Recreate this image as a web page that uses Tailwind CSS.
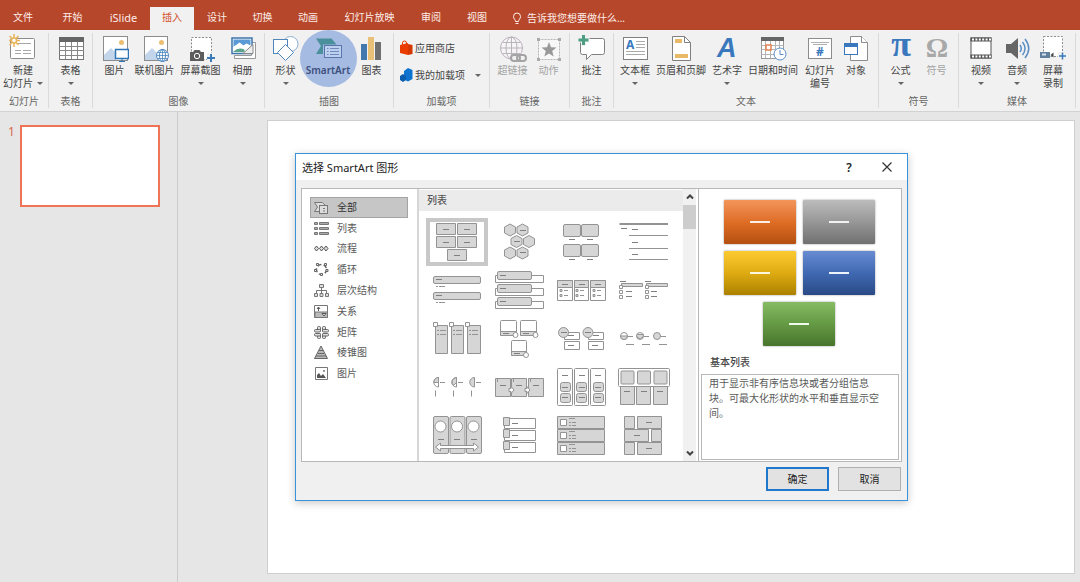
<!DOCTYPE html>
<html lang="zh-CN">
<head>
  <meta charset="UTF-8" />
  <title>选择 SmartArt 图形</title>
  <script src="https://cdn.jsdelivr.net/npm/@tailwindcss/browser@4"></script>
</head>
<body class="min-h-screen flex flex-col bg-[#e6e6e6] text-[#444] text-[10px] leading-[13px] whitespace-nowrap font-['Noto_Sans','Noto_Sans_CJK_SC',sans-serif]">

  <!-- Tabs -->
  <nav class="flex items-end h-[30px] bg-[#b7472a] text-[#fdeee9]">
    <button class="w-[46px] h-[23px] pb-[2px]">文件</button>
    <button class="w-[53px] h-[23px] pb-[2px]">开始</button>
    <button class="w-[49px] h-[23px] pb-[2px] text-[11px]">iSlide</button>
    <button class="w-[44px] h-[23px] pb-[2px] ml-[2px] bg-[#f1f1f1] text-[#d2502d]">插入</button>
    <button class="w-[46px] h-[23px] pb-[2px]">设计</button>
    <button class="w-[45px] h-[23px] pb-[2px]">切换</button>
    <button class="w-[46px] h-[23px] pb-[2px]">动画</button>
    <button class="w-[77px] h-[23px] pb-[2px]">幻灯片放映</button>
    <button class="w-[46px] h-[23px] pb-[2px]">审阅</button>
    <button class="w-[46px] h-[23px] pb-[2px]">视图</button>
    <label for="tellme" class="ml-3 h-[23px] pt-[5px]">
      <svg class="w-[10px] h-[13px]" viewBox="0 0 10 13" fill="none" stroke="#fdeee9"><path d="M3.500 9.500C3.500 7.500 1.500 7 1.500 4.500a3.500 3.500 0 0 1 7 0C8.500 7 6.500 7.500 6.500 9.500zM3.500 11.500h3" /></svg>
    </label>
    <input id="tellme" type="text" placeholder="告诉我您想要做什么..." class="ml-[5px] w-40 h-[23px] pb-[2px] bg-transparent outline-none placeholder:text-[#fdeee9]" />
  </nav>

  <!-- Ribbon -->
  <div class="flex h-[82px] pt-[3px] bg-[#f1f1f1] border-b border-[#d2d2d2]">

    <section class="flex flex-col w-[49px] h-[75px] border-r border-[#dadada]">
      <div class="flex flex-1">
        <button class="w-[46px] flex flex-col items-center pt-px">
          <svg class="w-7 h-7 mb-[2px]" viewBox="0 0 28 28" fill="none">
            <rect x="1.500" y="4.500" width="24" height="20" rx="1" fill="#fff" stroke="#8c8c8c" />
            <path d="M8 9.500h14M6 16.500h6M14 16.500h8M6 19.500h6M14 19.500h8" stroke="#a8a8a8" />
            <path d="M5 0v13M-1 6.500h12M.5 2l9 9M9.500 2l-9 9" stroke="#e9b55c" stroke-width="1.500" />
            <circle cx="5" cy="6.500" r="2.500" fill="#fff" stroke="#e9b55c" stroke-width="1.500" />
          </svg>
          <span>新建</span>
          <span class="flex items-center gap-1">幻灯片<i class="border-x-3 border-t-3 border-x-transparent border-t-[#666]"></i></span>
        </button>
      </div>
      <h2 class="text-center text-[#666]">幻灯片</h2>
    </section>

    <section class="flex flex-col w-[44px] h-[75px] border-r border-[#dadada]">
      <div class="flex flex-1 justify-center">
        <button class="w-9 flex flex-col items-center pt-px">
          <svg class="w-7 h-7 mb-[2px]" viewBox="0 0 28 28" fill="none">
            <rect x="2.500" y="3.500" width="24" height="22" fill="#fff" stroke="#777" />
            <path d="M2 3h25v5H2z" fill="#666" />
            <path d="M8.500 8v17M14.500 8v17M20.500 8v17M2.500 12.500h24M2.500 16.500h24M2.500 21.500h24" stroke="#888" />
          </svg>
          <span>表格</span>
          <i class="mt-[5px] border-x-3 border-t-3 border-x-transparent border-t-[#666]"></i>
        </button>
      </div>
      <h2 class="text-center text-[#666]">表格</h2>
    </section>

    <section class="flex flex-col w-[172px] h-[75px] border-r border-[#dadada]">
      <div class="flex flex-1 justify-center">
        <button class="w-9 flex flex-col items-center pt-px">
          <svg class="w-7 h-7 mb-[2px]" viewBox="0 0 28 28" fill="none">
            <rect x="2.500" y="2.500" width="24" height="24" fill="#fff" stroke="#8c8c8c" />
            <circle cx="20.500" cy="8.500" r="2.500" fill="#eabf72" />
            <path d="M3 21l7-7 5 5v7H3z" fill="#c3d5ea" />
            <rect x="14.500" y="15.500" width="13" height="9" fill="#fff" stroke="#2f74b5" stroke-width="1.500" />
            <path d="M21 25v2.500M18 27.500h6" stroke="#2f74b5" />
          </svg>
          <span>图片</span>
        </button>
        <button class="w-11 flex flex-col items-center pt-px">
          <svg class="w-7 h-7 mb-[2px]" viewBox="0 0 28 28" fill="none">
            <rect x="3.500" y="2.500" width="23" height="24" fill="#fff" stroke="#8c8c8c" />
            <circle cx="20.500" cy="8.500" r="2.500" fill="#eabf72" />
            <path d="M4 21l7-7 6 6v6H4z" fill="#c3d5ea" />
            <circle cx="21.500" cy="21.500" r="6" fill="#fff" stroke="#4a86c0" />
            <ellipse cx="21.500" cy="21.500" rx="3" ry="6" stroke="#4a86c0" />
            <path d="M15.500 21.500h12M21.500 15.500v12M16.500 18.500h10M16.500 24.500h10" stroke="#4a86c0" stroke-width=".8" />
          </svg>
          <span>联机图片</span>
        </button>
        <button class="w-12 flex flex-col items-center pt-px">
          <svg class="w-7 h-7 mb-[2px]" viewBox="0 0 28 28" fill="none">
            <rect x="4.500" y="3.500" width="20" height="22" fill="#fff" stroke="#8c8c8c" stroke-dasharray="2 1.500" />
            <path d="M3 18h3l1.500-2h5l1.500 2h3v9H3z" fill="#5c5c5c" />
            <circle cx="10" cy="22" r="2.700" stroke="#fff" />
            <path d="M20 19h8v9h-8z" fill="#f1f1f1" />
            <path d="M24 20v8M20 24h8" stroke="#3a7ab8" stroke-width="2" />
          </svg>
          <span>屏幕截图</span>
          <i class="mt-[5px] border-x-3 border-t-3 border-x-transparent border-t-[#666]"></i>
        </button>
        <button class="w-9 flex flex-col items-center pt-px">
          <svg class="w-7 h-7 mb-[2px]" viewBox="0 0 28 28" fill="none">
            <path d="M5.500 24.500v-3h17v-13h4v16z" fill="#fff" stroke="#999" />
            <rect x="3" y="4" width="20" height="15.500" fill="#fff" stroke="#3f76ab" stroke-width="1.500" />
            <path d="M4.500 5.500h17v6l-4-2-3 2-4-3-6 5z" fill="#5b9bd5" />
            <path d="M4.500 12.500l6-3.500 4 3 3-2 4 2v2l-6 1-5 2-6-.5z" fill="#fff" />
            <path d="M4.500 17.500q5-5 11-2v2.500h-11z" fill="#5ba58a" />
            <path d="M14 19.500l10-9v9z" fill="#eee" stroke="#888" />
          </svg>
          <span>相册</span>
          <i class="mt-[5px] border-x-3 border-t-3 border-x-transparent border-t-[#666]"></i>
        </button>
      </div>
      <h2 class="text-center text-[#666]">图像</h2>
    </section>

    <section class="flex flex-col w-[129px] h-[75px] border-r border-[#dadada]">
      <div class="flex flex-1 justify-center">
        <button class="w-7 flex flex-col items-center pt-px">
          <svg class="w-7 h-7 mb-[2px]" viewBox="0 0 28 28" fill="#fff" stroke="#4f86bb">
            <circle cx="18.500" cy="10" r="7.500" stroke="#8fb0d0" />
            <rect x="1.500" y="5.500" width="14" height="14" />
            <path d="M13.500 10.500l8 8-8 8-8-8z" />
          </svg>
          <span>形状</span>
          <i class="mt-[5px] border-x-3 border-t-3 border-x-transparent border-t-[#666]"></i>
        </button>
        <button class="w-[57px] h-[57px] -mt-[3px] flex flex-col items-center pt-1 rounded-full bg-[#a5bbe2] text-[#3c4f7c] font-semibold">
          <svg class="w-7 h-7 mb-[2px]" viewBox="0 0 28 28" fill="none">
            <path d="M2 4.500h15.500l5 6H9v9.500H2l5-8z" fill="#4a8f9c" />
            <rect x="10.500" y="11.500" width="17" height="12" fill="#bccfee" stroke="#5876ac" />
            <path d="M13 14.500h1.500M16 14.500h9M13 17.500h1.500M16 17.500h9M13 20.500h1.500M16 20.500h9" stroke="#6f8abb" />
          </svg>
          <span>SmartArt</span>
        </button>
        <button class="w-[30px] flex flex-col items-center pt-px">
          <svg class="w-7 h-7 mb-[2px]" viewBox="0 0 28 28">
            <path d="M3 10h6v16H3z" fill="#4378ae" />
            <path d="M10 3h6v23h-6z" fill="#e9c078" />
            <path d="M17 8h6v18h-6z" fill="#6f6f6f" />
          </svg>
          <span>图表</span>
        </button>
      </div>
      <h2 class="text-center text-[#666]">插图</h2>
    </section>

    <section class="flex flex-col w-[96px] h-[75px] border-r border-[#dadada]">
      <div class="flex flex-col flex-1 items-start gap-[11px] pl-[6px] pt-[7px]">
        <button class="flex items-center gap-[2px] h-4">
          <svg class="w-[13px] h-4" viewBox="0 0 13 16"><path d="M0 5l8-2v12l-8-2z" fill="#eb3c00" /><path d="M8 4l4.500 1v9L8 15z" fill="#d63600" /><path d="M2.500 5V3q0-2 2-2t2 2v1" fill="none" stroke="#eb3c00" /></svg>
          应用商店
        </button>
        <button class="flex items-center gap-[2px] h-4">
          <svg class="w-[13px] h-4" viewBox="0 0 13 16"><path d="M4 4l4-3 4.500 2v9L8 14.500 5 13V9l-1-1z" fill="#0e74cf" /><path d="M0 9l3-2 3 2v4l-3 2-3-2z" fill="#0b5fae" /></svg>
          我的加载项
          <i class="ml-2 border-x-3 border-t-3 border-x-transparent border-t-[#666]"></i>
        </button>
      </div>
      <h2 class="text-center text-[#666]">加载项</h2>
    </section>

    <section class="flex flex-col w-[80px] h-[75px] border-r border-[#dadada]">
      <div class="flex flex-1 justify-center text-[#a3a3a3]">
        <button disabled class="w-[38px] flex flex-col items-center pt-px">
          <svg class="w-7 h-7 mb-[2px]" viewBox="0 0 28 28" fill="none" stroke="#b9b3ba">
            <circle cx="12.500" cy="14" r="11" fill="#f6f4f6" />
            <ellipse cx="12.500" cy="14" rx="5.500" ry="11" />
            <path d="M1.500 14h22M12.500 3v22M3.500 8.500h18M3.500 19.500h18" />
            <g fill="#f1f1f1" stroke="#a3a3a3" stroke-width="2"><rect x="12" y="21" width="9" height="6" rx="3" /><rect x="18" y="21" width="9" height="6" rx="3" fill="none" /></g>
          </svg>
          <span>超链接</span>
        </button>
        <button disabled class="w-[34px] flex flex-col items-center pt-px">
          <svg class="w-7 h-7 mb-[2px]" viewBox="0 0 28 28">
            <rect x="3.500" y="5.500" width="21" height="20" fill="#f7f7f7" stroke="#b5b5b5" stroke-dasharray="2 1" />
            <path d="M2 4h3v3H2zM23 4h3v3h-3zM2 24h3v3H2zM23 24h3v3h-3z" fill="#aaa" />
            <path d="M14 8l2 5.200 5.500.3-4.300 3.500 1.500 5.500-4.700-3.100-4.700 3.100 1.500-5.500-4.300-3.500 5.500-.3z" fill="#999" />
          </svg>
          <span>动作</span>
        </button>
      </div>
      <h2 class="text-center text-[#666]">链接</h2>
    </section>

    <section class="flex flex-col w-[44px] h-[75px] border-r border-[#dadada]">
      <div class="flex flex-1 justify-center">
        <button class="w-9 flex flex-col items-center pt-px">
          <svg class="w-7 h-7 mb-[2px]" viewBox="0 0 28 28" fill="none">
            <path d="M4.500 4.500h20q2 0 2 2v12q0 2-2 2h-11l-5 5v-5h-4q-2 0-2-2v-12q0-2 2-2z" fill="#fff" stroke="#808080" />
            <path d="M5.500 0v12M-.5 6h12" stroke="#f1f1f1" stroke-width="5" />
            <path d="M5.500 1v10M.5 6h10" stroke="#4e9e81" stroke-width="3" />
          </svg>
          <span>批注</span>
        </button>
      </div>
      <h2 class="text-center text-[#666]">批注</h2>
    </section>

    <section class="flex flex-col w-[265px] h-[75px] border-r border-[#dadada]">
      <div class="flex flex-1">
        <button class="w-[42px] flex flex-col items-center pt-px">
          <svg class="w-7 h-7 mb-[2px]" viewBox="0 0 28 28">
            <rect x="2.500" y="3.500" width="24" height="22" fill="#fff" stroke="#808080" />
            <path d="M15 7.500h9M15 10.500h9M15 13.500h9M5 17.500h19M5 20.500h19" stroke="#aaa" />
            <text x="5" y="15" fill="#3a78bd" font-size="12" font-weight="700">A</text>
          </svg>
          <span>文本框</span>
          <i class="mt-[5px] border-x-3 border-t-3 border-x-transparent border-t-[#666]"></i>
        </button>
        <button class="w-[50px] flex flex-col items-center pt-px">
          <svg class="w-7 h-7 mb-[2px]" viewBox="0 0 28 28">
            <path d="M5.500 2.500h12l6 6v18h-18z" fill="#fff" stroke="#808080" />
            <path d="M17.500 2.500v6h6" fill="none" stroke="#808080" />
            <path d="M8 5h7v4H8zM8 20h13v4H8z" fill="#e9b968" />
          </svg>
          <span>页眉和页脚</span>
        </button>
        <button class="w-[42px] flex flex-col items-center pt-px">
          <svg class="w-7 h-7 mb-[2px] overflow-visible" viewBox="0 0 28 28">
            <text x="4" y="23" fill="#3a78bd" font-size="27" font-weight="700" font-style="italic" font-family="Liberation Sans, sans-serif">A</text>
          </svg>
          <span>艺术字</span>
          <i class="mt-[5px] border-x-3 border-t-3 border-x-transparent border-t-[#666]"></i>
        </button>
        <button class="w-[50px] flex flex-col items-center pt-px">
          <svg class="w-7 h-7 mb-[2px]" viewBox="0 0 28 28" fill="none">
            <rect x="2.500" y="3.500" width="22" height="21" fill="#fff" stroke="#999" />
            <path d="M6.500 7v17M11.500 7v17M16.500 7v17M20.500 7v17M2.500 11.500h22M2.500 15.500h22M2.500 20.500h22" stroke="#b5b5b5" />
            <path d="M2 3h23v4H2z" fill="#666" />
            <rect x="7" y="11" width="5" height="5" fill="#fff" stroke="#e38350" stroke-width="1.500" />
            <circle cx="21" cy="20" r="6" fill="#fff" stroke="#5b8fc4" />
            <path d="M21 16v4.500h3.500" stroke="#5b8fc4" />
          </svg>
          <span>日期和时间</span>
        </button>
        <button class="w-11 flex flex-col items-center pt-px">
          <svg class="w-7 h-7 mb-[2px]" viewBox="0 0 28 28">
            <rect x="2.500" y="4.500" width="23" height="20" fill="#fff" stroke="#8c8c8c" />
            <path d="M5 8.500h18M7 10.500h14" stroke="#b0b0b0" />
            <text x="10" y="22" fill="#3a78bd" font-size="12" font-weight="700">#</text>
          </svg>
          <span>幻灯片</span>
          <span>编号</span>
        </button>
        <button class="w-7 flex flex-col items-center pt-px">
          <svg class="w-7 h-7 mb-[2px]" viewBox="0 0 28 28" fill="#fff">
            <path d="M8.500 2.500h11l6 6v18h-17z" stroke="#8c8c8c" />
            <path d="M19.500 2.500v6h6" stroke="#8c8c8c" />
            <rect x="2.500" y="9.500" width="13" height="11" stroke="#3a78bd" />
            <path d="M2 9h14v4H2z" fill="#3a78bd" />
          </svg>
          <span>对象</span>
        </button>
      </div>
      <h2 class="text-center text-[#666]">文本</h2>
    </section>

    <section class="flex flex-col w-[80px] h-[75px] border-r border-[#dadada]">
      <div class="flex flex-1 justify-center">
        <button class="w-9 flex flex-col items-center pt-px">
          <svg class="w-7 h-7 mb-[2px] overflow-visible" viewBox="0 0 28 28">
            <text x="14" y="22" text-anchor="middle" fill="#3a78bd" font-size="36" font-weight="700" font-family="Liberation Serif, serif">π</text>
          </svg>
          <span>公式</span>
          <i class="mt-[5px] border-x-3 border-t-3 border-x-transparent border-t-[#666]"></i>
        </button>
        <button disabled class="w-9 flex flex-col items-center pt-px text-[#a3a3a3]">
          <svg class="w-7 h-7 mb-[2px] overflow-visible" viewBox="0 0 28 28">
            <text x="14" y="23" text-anchor="middle" fill="#a8a8a8" font-size="28" font-weight="700" font-family="Liberation Serif, serif">Ω</text>
          </svg>
          <span>符号</span>
        </button>
      </div>
      <h2 class="text-center text-[#666]">符号</h2>
    </section>

    <section class="flex flex-col w-[117px] h-[75px] border-r border-[#dadada]">
      <div class="flex flex-1 justify-center">
        <button class="w-9 flex flex-col items-center pt-px">
          <svg class="w-7 h-7 mb-[2px]" viewBox="0 0 28 28">
            <rect x="4" y="4" width="20" height="20" fill="#fff" stroke="#555" />
            <path d="M3.500 5.500h21M3.500 22.500h21" stroke="#555" stroke-width="4" />
            <path d="M5 5.500h19M5 22.500h19" stroke="#fff" stroke-width="2" stroke-dasharray="2 1.400" />
          </svg>
          <span>视频</span>
          <i class="mt-[5px] border-x-3 border-t-3 border-x-transparent border-t-[#666]"></i>
        </button>
        <button class="w-9 flex flex-col items-center pt-px">
          <svg class="w-7 h-7 mb-[2px]" viewBox="0 0 28 28" fill="none" stroke="#5b8fc4" stroke-width="1.500">
            <path d="M3 10h5l7-6v21l-7-6H3z" fill="#666" stroke="none" />
            <path d="M17 11q2.500 3.500 0 7M19.500 8q5 6.500 0 13M22 5q7.500 9.500 0 19" />
          </svg>
          <span>音频</span>
          <i class="mt-[5px] border-x-3 border-t-3 border-x-transparent border-t-[#666]"></i>
        </button>
        <button class="w-9 flex flex-col items-center pt-px">
          <svg class="w-7 h-7 mb-[2px]" viewBox="0 0 28 28">
            <rect x="4.500" y="2.500" width="19" height="20" fill="#fff" stroke="#8c8c8c" stroke-dasharray="2 1.500" />
            <path d="M1 18h10v6H1z" fill="#5f7f9c" />
            <path d="M3 19.500h4v2H3z" fill="#d5e2ef" />
            <path d="M11.500 21l3-2.500v5z" fill="#444" />
            <path d="M19 18h9v8h-9z" fill="#f1f1f1" />
            <path d="M23.500 18.500v7M20 22h7" stroke="#3a78bd" stroke-width="1.500" />
          </svg>
          <span>屏幕</span>
          <span>录制</span>
        </button>
      </div>
      <h2 class="text-center text-[#666]">媒体</h2>
    </section>
  </div>

  <!-- Workspace -->
  <main class="relative flex flex-1">
    <aside class="flex items-start w-[178px] pt-[13px] pl-2 border-r border-[#c9cccc]">
      <span class="w-3 text-[12px] text-[#d9694e]">1</span>
      <button aria-label="幻灯片 1" class="w-[140px] h-[82px] bg-white border-2 border-[#ee7455]"></button>
    </aside>
    <div class="flex flex-1 pt-2 pb-2 pl-[89px] pr-[5px]">
      <div class="flex-1 bg-white border border-[#cfcfcf]"></div>
    </div>

    <!-- Dialog -->
    <div role="dialog" aria-labelledby="dlgTitle" class="absolute left-[295px] top-[41px] w-[613px] bg-[#f0f0f0] border border-[#3a93da] shadow-[0_2px_8px_rgba(0,0,0,0.22)]">
      <header class="flex items-center h-[26px] pl-[6px] pr-[14px] bg-white text-[#222]">
        <h1 id="dlgTitle" class="flex-1 text-[11px]">选择 SmartArt 图形</h1>
        <button aria-label="帮助" class="w-5 mr-[22px] text-[12px] font-semibold">?</button>
        <button aria-label="关闭" class="w-3 h-3">
          <svg class="w-3 h-3" viewBox="0 0 12 12" stroke="#333" stroke-width="1.200"><path d="M1.500 1.500l9 9M10.500 1.500l-9 9" /></svg>
        </button>
      </header>

      <div class="flex h-[274px] mt-2 mx-[5px] bg-white border border-[#b8b8b8]">
        <!-- Categories -->
        <div class="w-[115px] pt-2 pl-2 pr-[9px] text-[#5a5a5a]">
          <div class="grid grid-rows-9 h-[187px]">
            <button class="flex items-center gap-2 pl-[3px] bg-[#c6c6c6] border border-[#a3a3a3] text-[#333]">
              <svg class="w-[15px] h-[15px]" viewBox="0 0 15 15" fill="#ddd" stroke="#777"><path d="M.5 2.500h8l3 3h-5v6h-6l3-4.500z" /><rect x="5.500" y="5.500" width="8" height="8" /><path d="M9 8.500h2M9 11h2" /></svg>
              全部
            </button>
            <button class="flex items-center gap-2 pl-1">
              <svg class="w-[15px] h-[15px]" viewBox="0 0 15 15" fill="#aaa" stroke="#777"><path d="M.5 1.500h3v2h-3zM5.500 1.500h9v2h-9zM.5 6.500h3v2h-3zM5.500 6.500h9v2h-9zM.5 11.500h3v2h-3zM5.500 11.500h9v2h-9z" /></svg>
              列表
            </button>
            <button class="flex items-center gap-2 pl-1">
              <svg class="w-[15px] h-[15px]" viewBox="0 0 15 15" fill="#ddd" stroke="#555"><path d="M2.500 5l2 2.500-2 2.500-2-2.500zM7.500 5l2 2.500-2 2.500-2-2.500zM12 5l2 2.500-2 2.500-2-2.500z" /></svg>
              流程
            </button>
            <button class="flex items-center gap-2 pl-1">
              <svg class="w-[15px] h-[15px]" viewBox="0 0 15 15" fill="#eee" stroke="#666"><circle cx="7.500" cy="7.500" r="5" fill="none" stroke-width="1.500" stroke-dasharray="4 2.300" /><path d="M2.500 1.500h2v2h-2zM10.500 1.500h2v2h-2zM12 7.500h2v2h-2zM6.500 11.500h2v2h-2zM.5 7.500h2v2h-2z" /></svg>
              循环
            </button>
            <button class="flex items-center gap-2 pl-1">
              <svg class="w-[15px] h-[15px]" viewBox="0 0 15 15" fill="#ddd" stroke="#777"><path d="M7.500 4v7M2.500 11V7.500h10V11" fill="none" /><path d="M5.500 1.500h4v3h-4zM.5 10.500h3v3h-3zM6 10.500h3v3H6zM11.500 10.500h3v3h-3z" /></svg>
              层次结构
            </button>
            <button class="flex items-center gap-2 pl-1">
              <svg class="w-[15px] h-[15px]" viewBox="0 0 15 15" fill="#fff" stroke="#777"><path d="M.5 1.500h13v12H.5z" /><path d="M1 8h12.500v5.500H1z" fill="#bbb" /><path d="M4.500 7V3M3 5l1.500-2L6 5M8 9.500h4l-2 2.500z" stroke="#555" /></svg>
              关系
            </button>
            <button class="flex items-center gap-2 pl-1">
              <svg class="w-[15px] h-[15px]" viewBox="0 0 15 15" fill="#ddd" stroke="#666"><rect x="3.500" y="1.500" width="3" height="5" rx="1" /><rect x="8.500" y="1.500" width="3" height="5" rx="1" /><rect x="3.500" y="8.500" width="3" height="5" rx="1" /><rect x="8.500" y="8.500" width="3" height="5" rx="1" /><rect x=".5" y="4.500" width="6" height="2.500" rx="1" /><rect x="8.500" y="4.500" width="6" height="2.500" rx="1" /><rect x=".5" y="8.500" width="6" height="2.500" rx="1" /><rect x="8.500" y="8.500" width="6" height="2.500" rx="1" /></svg>
              矩阵
            </button>
            <button class="flex items-center gap-2 pl-1">
              <svg class="w-[15px] h-[15px]" viewBox="0 0 15 15" fill="#bbb" stroke="#666"><path d="M7 1l6.500 12.500H.5z" /><path d="M5 5.500h4M4 8.500h6M2 11h10" /></svg>
              棱锥图
            </button>
            <button class="flex items-center gap-2 pl-1">
              <svg class="w-[15px] h-[15px]" viewBox="0 0 15 15"><path d="M1.500 1.500h12v12h-12z" fill="#fff" stroke="#777" /><path d="M3 12V9l2-2 2 3 2-2 3 4z" fill="#555" /><circle cx="10" cy="5" r="1" fill="#777" /></svg>
              图片
            </button>
          </div>
        </div>

        <!-- Layout gallery -->
        <div class="w-[266px] border-l-2 border-[#d6d6d6]">
          <h2 class="mt-px h-[21px] pl-2 leading-[21px] bg-[#ebebeb] font-medium text-[#555]">列表</h2>
          <svg class="hidden">
            <defs>
              <path id="dash" d="M0 0h6" fill="none" stroke="#808080" />
              <g id="hex"><path d="M0-6L5.500-3v6L0 6-5.500 3v-6z" /></g>
            </defs>
          </svg>
          <div class="grid grid-cols-[repeat(4,62px)] auto-rows-[48px] mt-[7px] ml-[7px] fill-[#d6d6d6] stroke-[#939393]">
            <button aria-label="基本列表" class="inset-ring-4 inset-ring-[#c8c8c8]">
              <svg class="w-[62px] h-12" viewBox="0 0 62 48">
                <path d="M10.500 5.500h19v11h-19zM31.500 5.500h19v11h-19zM10.500 18.500h19v11h-19zM31.500 18.500h19v11h-19zM21.500 31.500h19v11h-19z" />
                <use href="#dash" x="17" y="11.500" /><use href="#dash" x="38" y="11.500" /><use href="#dash" x="17" y="24.500" /><use href="#dash" x="38" y="24.500" /><use href="#dash" x="28" y="37.500" />
              </svg>
            </button>
            <button aria-label="交替六边形">
              <svg class="w-[62px] h-12" viewBox="0 0 62 48">
                <use href="#hex" x="22" y="12" /><use href="#hex" x="34.500" y="12" /><use href="#hex" x="28.500" y="23.500" /><use href="#hex" x="41" y="23.500" /><use href="#hex" x="22" y="35" /><use href="#hex" x="34.500" y="35" />
                <use href="#dash" x="32" y="12.500" /><use href="#dash" x="26" y="23.500" /><use href="#dash" x="32" y="34.500" />
              </svg>
            </button>
            <button aria-label="图片题注列表">
              <svg class="w-[62px] h-12" viewBox="0 0 62 48">
                <rect x="13.500" y="6.500" width="17" height="12" rx="1.500" /><rect x="31.500" y="6.500" width="17" height="12" rx="1.500" /><rect x="13.500" y="26.500" width="17" height="12" rx="1.500" /><rect x="31.500" y="26.500" width="17" height="12" rx="1.500" />
                <use href="#dash" x="19" y="21.500" /><use href="#dash" x="37" y="21.500" /><use href="#dash" x="19" y="41.500" /><use href="#dash" x="37" y="41.500" />
              </svg>
            </button>
            <button aria-label="线型列表">
              <svg class="w-[62px] h-12" viewBox="0 0 62 48">
                <path d="M7.500 6H56" stroke-width="2" /><path d="M17 17.500h39M17 30.500h39M17 41.500h39" />
                <use href="#dash" x="9" y="10.500" /><use href="#dash" x="20" y="11.500" /><use href="#dash" x="20" y="24.500" /><use href="#dash" x="20" y="36.500" />
              </svg>
            </button>

            <button aria-label="垂直项目符号列表">
              <svg class="w-[62px] h-12" viewBox="0 0 62 48">
                <rect x="7.500" y="10.500" width="47" height="7" rx="1.500" /><rect x="7.500" y="26.500" width="47" height="7" rx="1.500" />
                <use href="#dash" x="10" y="13.500" /><use href="#dash" x="10" y="29.500" />
                <path d="M10 20.500h2M13 20.500h6M10 36.500h2M13 36.500h6" />
              </svg>
            </button>
            <button aria-label="垂直框列表">
              <svg class="w-[62px] h-12" viewBox="0 0 62 48">
                <path d="M7.500 9.500h48v7h-48zM7.500 22.500h48v7h-48zM7.500 35.500h48v7h-48z" fill="#fff" />
                <rect x="9.500" y="5.500" width="34" height="8" rx="1.500" /><rect x="9.500" y="18.500" width="34" height="8" rx="1.500" /><rect x="9.500" y="31.500" width="34" height="8" rx="1.500" />
                <use href="#dash" x="12" y="9.500" /><use href="#dash" x="12" y="22.500" /><use href="#dash" x="12" y="35.500" />
              </svg>
            </button>
            <button aria-label="水平项目符号列表">
              <svg class="w-[62px] h-12" viewBox="0 0 62 48">
                <path d="M7.500 14.500h15v20h-15zM24.500 14.500h14v20h-14zM40.500 14.500h15v20h-15z" fill="#fff" />
                <path d="M7.500 14.500h15v7h-15zM24.500 14.500h14v7h-14zM40.500 14.500h15v7h-15z" />
                <use href="#dash" x="12" y="18.500" /><use href="#dash" x="29" y="18.500" /><use href="#dash" x="45" y="18.500" />
                <path d="M10 23.500h2v2h-2zM26 23.500h2v2h-2zM43 23.500h2v2h-2zM10 28.500h2v2h-2zM26 28.500h2v2h-2zM43 28.500h2v2h-2zM14 24.500h4M30 24.500h4M47 24.500h4M14 29.500h4M30 29.500h4M47 29.500h4" />
              </svg>
            </button>
            <button aria-label="方形重点列表">
              <svg class="w-[62px] h-12" viewBox="0 0 62 48">
                <path d="M9.500 17.500h21v3h-21zM34.500 17.500h21v3h-21z" />
                <path d="M7.500 19.500h3v3h-3zM7.500 24.500h3v3h-3zM7.500 29.500h3v3h-3zM33.500 19.500h3v3h-3zM33.500 24.500h3v3h-3zM33.500 29.500h3v3h-3z" fill="#fff" />
                <use href="#dash" x="8" y="15.500" /><use href="#dash" x="33" y="15.500" /><use href="#dash" x="14" y="25.500" /><use href="#dash" x="39" y="25.500" /><use href="#dash" x="14" y="30.500" /><use href="#dash" x="39" y="30.500" />
              </svg>
            </button>

            <button aria-label="图片重点列表">
              <svg class="w-[62px] h-12" viewBox="0 0 62 48">
                <path d="M9.500 11.500h12v28h-12zM25.500 11.500h12v28h-12zM41.500 11.500h13v28h-13z" />
                <path d="M7.500 8.500h4v4h-4zM23.500 8.500h4v4h-4zM39.500 8.500h4v4h-4z" fill="#fff" />
                <path d="M11 16.500h2M14 16.500h6M11 20.500h2M14 20.500h6M27 16.500h2M30 16.500h6M27 20.500h2M30 20.500h6M43 16.500h2M46 16.500h6M43 20.500h2M46 20.500h6" />
              </svg>
            </button>
            <button aria-label="蛇形图片重点列表">
              <svg class="w-[62px] h-12" viewBox="0 0 62 48">
                <g fill="#fff"><rect x="12.500" y="6.500" width="16" height="15" rx="1" /><rect x="32.500" y="6.500" width="16" height="15" rx="1" /><rect x="23.500" y="26.500" width="15" height="15" rx="1" /></g>
                <path d="M12.500 17.500h16v4h-16zM32.500 17.500h16v4h-16zM23.500 37.500h15v4h-15z" />
                <g fill="#fff"><circle cx="27.500" cy="21" r="2.500" /><circle cx="47.500" cy="21" r="2.500" /><circle cx="38" cy="41" r="2.500" /></g>
                <use href="#dash" x="15" y="19.500" /><use href="#dash" x="35" y="19.500" /><use href="#dash" x="26" y="39.500" />
              </svg>
            </button>
            <button aria-label="堆叠列表">
              <svg class="w-[62px] h-12" viewBox="0 0 62 48">
                <path d="M14.500 18.500h15v7h-15zM14.500 27.500h15v8h-15zM38.500 18.500h15v7h-15zM38.500 27.500h15v8h-15z" fill="#fff" />
                <circle cx="13.500" cy="18.500" r="5" /><circle cx="38" cy="18.500" r="5" />
                <use href="#dash" x="11" y="18.500" /><use href="#dash" x="35" y="18.500" /><use href="#dash" x="18" y="21.500" /><use href="#dash" x="43" y="21.500" /><use href="#dash" x="18" y="31.500" /><use href="#dash" x="42" y="31.500" />
              </svg>
            </button>
            <button aria-label="递增循环流程">
              <svg class="w-[62px] h-12" viewBox="0 0 62 48">
                <circle cx="12" cy="22" r="3.500" fill="#fff" /><path d="M8.500 22h7a3.500 3.500 0 0 1-7 0z" />
                <circle cx="28" cy="22" r="3.500" fill="#fff" /><path d="M25 20.500h6.500a3.500 3.500 0 0 1-7 1z" />
                <circle cx="45" cy="22" r="3.500" />
                <path d="M16 22.500h5M32 22.500h5M49 22.500h5M14 30.500h8M30 30.500h8M47 30.500h8" />
              </svg>
            </button>

            <button aria-label="饼图流程">
              <svg class="w-[62px] h-12" viewBox="0 0 62 48">
                <path d="M12.500 15.500v9.500a4.700 4.700 0 0 1 0-9.500z" fill="#fff" /><path d="M12.500 15.500v5h-4.500a4.700 4.700 0 0 1 4.500-5z" />
                <path d="M30.500 15.500v9.500a4.700 4.700 0 0 1 0-9.500z" fill="#fff" /><path d="M30.500 20.500v-5a4.700 4.700 0 0 0-3 8z" />
                <path d="M48.500 15.500v9.500a4.700 4.700 0 0 1 0-9.500z" />
                <path d="M14 20.500h5M32 20.500h5M50 20.500h5M9.500 28.500v6M27.500 28.500v6M45.500 28.500v6" />
              </svg>
            </button>
            <button aria-label="详细流程">
              <svg class="w-[62px] h-12" viewBox="0 0 62 48">
                <path d="M7.500 16.500h15v18h-15zM23.500 16.500h15v18h-15zM40.500 16.500h15v18h-15z" />
                <path d="M21 26.500h2v-2l3 3.500-3 3.500v-2h-2zM37 26.500h2v-2l3 3.500-3 3.500v-2h-2z" fill="#fff" />
                <use href="#dash" x="12" y="23.500" /><use href="#dash" x="28" y="23.500" /><use href="#dash" x="45" y="23.500" />
                <path d="M9.500 17v3M25.500 17v3M42.500 17v3" />
              </svg>
            </button>
            <button aria-label="分组列表">
              <svg class="w-[62px] h-12" viewBox="0 0 62 48">
                <g fill="#fff"><rect x="7.500" y="6.500" width="15" height="37" rx="1" /><rect x="24.500" y="6.500" width="14" height="37" rx="1" /><rect x="40.500" y="6.500" width="15" height="37" rx="1" /></g>
                <g><rect x="10.500" y="20.500" width="10" height="9" rx="2" /><rect x="26.500" y="20.500" width="10" height="9" rx="2" /><rect x="43.500" y="20.500" width="10" height="9" rx="2" /><rect x="10.500" y="31.500" width="10" height="9" rx="2" /><rect x="26.500" y="31.500" width="10" height="9" rx="2" /><rect x="43.500" y="31.500" width="10" height="9" rx="2" /></g>
                <use href="#dash" x="12" y="13.500" /><use href="#dash" x="29" y="13.500" /><use href="#dash" x="45" y="13.500" />
                <use href="#dash" x="12" y="25.500" /><use href="#dash" x="29" y="25.500" /><use href="#dash" x="45" y="25.500" />
                <use href="#dash" x="12" y="35.500" /><use href="#dash" x="29" y="35.500" /><use href="#dash" x="45" y="35.500" />
              </svg>
            </button>
            <button aria-label="水平图片列表">
              <svg class="w-[62px] h-12" viewBox="0 0 62 48">
                <path d="M8.500 24.500h14v18h-14zM24.500 24.500h14v18h-14zM41.500 24.500h14v18h-14z" />
                <rect x="6.500" y="6.500" width="51" height="18" rx="1" fill="#fff" />
                <rect x="9" y="9" width="13" height="13" rx="1" /><rect x="25.500" y="9" width="13" height="13" rx="1" /><rect x="42" y="9" width="13" height="13" rx="1" />
                <use href="#dash" x="12" y="29.500" /><use href="#dash" x="29" y="29.500" /><use href="#dash" x="45" y="29.500" />
              </svg>
            </button>

            <button aria-label="连续图片列表">
              <svg class="w-[62px] h-12" viewBox="0 0 62 48">
                <rect x="7.500" y="6.500" width="15" height="37" rx="1.500" /><rect x="24" y="6.500" width="15" height="37" rx="1.500" /><rect x="40.500" y="6.500" width="15" height="37" rx="1.500" />
                <g fill="#fff"><circle cx="14.500" cy="16.500" r="5.500" /><circle cx="31" cy="16.500" r="5.500" /><circle cx="47.500" cy="16.500" r="5.500" /><path d="M9.500 37l5-4v2.500h33V33l5 4-5 4v-2.500h-33V41z" /></g>
                <use href="#dash" x="12" y="29.500" /><use href="#dash" x="28" y="29.500" /><use href="#dash" x="45" y="29.500" />
              </svg>
            </button>
            <button aria-label="图片条纹">
              <svg class="w-[62px] h-12" viewBox="0 0 62 48">
                <path d="M16.500 8.500h31v10h-31zM16.500 20.500h31v10h-31zM16.500 32.500h31v10h-31z" fill="#fff" />
                <path d="M15.500 7.500h6v8h-6zM15.500 19.500h6v8h-6zM15.500 31.500h6v8h-6z" />
                <use href="#dash" x="24" y="13.500" /><use href="#dash" x="24" y="25.500" /><use href="#dash" x="24" y="37.500" />
              </svg>
            </button>
            <button aria-label="垂直图片列表">
              <svg class="w-[62px] h-12" viewBox="0 0 62 48">
                <path d="M7.500 6.500h47v12h-47zM7.500 19.500h47v12h-47zM7.500 32.500h47v12h-47z" />
                <path d="M10.500 9.500h6v6h-6zM10.500 22.500h6v6h-6zM10.500 35.500h6v6h-6z" fill="#fff" />
                <path d="M19 8.500h6M19 12.500h2M22 12.500h4M19 15.500h2M22 15.500h4M19 21.500h6M19 25.500h2M22 25.500h4M19 28.500h2M22 28.500h4M19 34.500h6M19 38.500h2M22 38.500h4M19 41.500h2M22 41.500h4" />
              </svg>
            </button>
            <button aria-label="交替图片块">
              <svg class="w-[62px] h-12" viewBox="0 0 62 48">
                <path d="M12.500 6.500h10v12h-10zM25.500 6.500h24v12h-24zM12.500 19.500h24v12h-24zM39.500 19.500h10v12h-10zM12.500 32.500h10v12h-10zM25.500 32.500h24v12h-24z" />
                <use href="#dash" x="34" y="12.500" /><use href="#dash" x="22" y="25.500" /><use href="#dash" x="34" y="38.500" />
              </svg>
            </button>
          </div>
        </div>

        <!-- Scrollbar -->
        <div class="flex flex-col w-[13px] bg-[#f1f1f1]">
          <button aria-label="向上" class="grid place-items-center h-4"><svg class="w-2 h-2" viewBox="0 0 8 8" fill="none" stroke="#444" stroke-width="2"><path d="M1 5.500l3-3 3 3" /></svg></button>
          <div class="flex-1"><div class="h-6 bg-[#cdcdcd]"></div></div>
          <button aria-label="向下" class="grid place-items-center h-4"><svg class="w-2 h-2" viewBox="0 0 8 8" fill="none" stroke="#444" stroke-width="2"><path d="M1 2.500l3 3 3-3" /></svg></button>
        </div>

        <!-- Preview -->
        <div class="flex flex-col flex-1 ml-[2px] border-l border-[#b8b8b8]">
          <div class="flex flex-wrap justify-center content-start gap-[7px] h-[162px] pl-6 pr-[26px] pt-[11px]">
            <div class="grid place-items-center w-[72px] h-11 rounded-[1px] bg-linear-to-b from-[#f3955a] via-[#df6d25] to-[#b5500f] shadow-[0_0_2px_#888]"><i class="w-5 h-[2px] bg-[#fbeee6]"></i></div>
            <div class="grid place-items-center w-[72px] h-11 rounded-[1px] bg-linear-to-b from-[#bcbcbc] via-[#979797] to-[#707070] shadow-[0_0_2px_#888]"><i class="w-5 h-[2px] bg-[#f2f2f2]"></i></div>
            <div class="grid place-items-center w-[72px] h-11 rounded-[1px] bg-linear-to-b from-[#fccb30] via-[#dfab12] to-[#ab8100] shadow-[0_0_2px_#888]"><i class="w-5 h-[2px] bg-[#fdf6df]"></i></div>
            <div class="grid place-items-center w-[72px] h-11 rounded-[1px] bg-linear-to-b from-[#688cd2] via-[#4069b3] to-[#2a4a85] shadow-[0_0_2px_#888]"><i class="w-5 h-[2px] bg-[#edf2fb]"></i></div>
            <div class="grid place-items-center w-[72px] h-11 rounded-[1px] bg-linear-to-b from-[#86bb62] via-[#659a45] to-[#48752c] shadow-[0_0_2px_#888]"><i class="w-5 h-[2px] bg-[#f0f8eb]"></i></div>
          </div>
          <h3 class="h-[23px] pl-[11px] pt-[5px] font-medium">基本列表</h3>
          <p class="flex-1 mx-[2px] mb-px pl-[7px] pr-4 pt-px border border-[#b8b8b8] whitespace-normal leading-[15px] text-[#5a5a5a]">用于显示非有序信息块或者分组信息块。可最大化形状的水平和垂直显示空间。</p>
        </div>
      </div>

      <footer class="flex justify-end gap-[9px] pt-[5px] pb-[9px] pr-[6px] text-[#222]">
        <button class="w-[63px] h-6 bg-[#e2e2e2] border-2 border-[#1f78cc]">确定</button>
        <button class="w-[63px] h-6 bg-[#e2e2e2] border border-[#b0b0b0]">取消</button>
      </footer>
    </div>
  </main>
</body>
</html>
